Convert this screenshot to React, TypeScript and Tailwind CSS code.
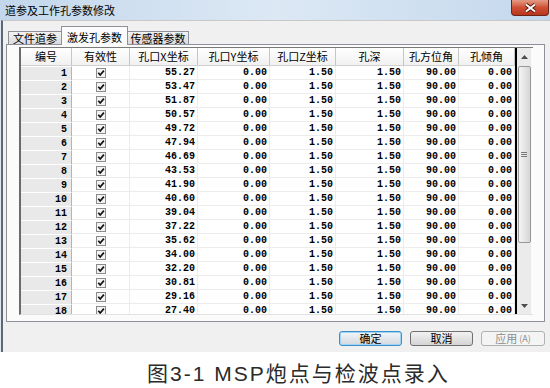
import React from "react";

const xs = [
  "55.27", "53.47", "51.87", "50.57", "49.72", "47.94", "46.69", "43.53", "41.90",
  "40.60", "39.04", "37.22", "35.62", "34.00", "32.20", "30.81", "29.16", "27.40",
];

const cols = [
  { title: "编号", w: "w-[51px]" },
  { title: "有效性", w: "w-[58px]" },
  { title: "孔口X坐标", w: "w-[68px]" },
  { title: "孔口Y坐标", w: "w-[72px]" },
  { title: "孔口Z坐标", w: "w-[66px]" },
  { title: "孔深", w: "w-[68px]" },
  { title: "孔方位角", w: "w-[55px]" },
  { title: "孔倾角", w: "w-[56px]" },
];

const cjk = { fontFamily: '"Noto Sans CJK SC", "Noto Sans", sans-serif' };
const mono = { fontFamily: '"Liberation Mono", "DejaVu Sans Mono", monospace' };

function Check() {
  return (
    <svg width="10" height="10" viewBox="0 0 10 10">
      <rect x="0.5" y="0.5" width="9" height="9" fill="#f3f3f3" stroke="#8a8a8a" />
      <path d="M2.3 4.8 L4.2 7 L7.9 2.6" fill="none" stroke="#111" strokeWidth="1.7" />
    </svg>
  );
}

function Row({ n, x }: { n: number; x: string }) {
  const cell = "h-[14px] flex items-center justify-end pr-[2px] border-r border-b border-[#ececec]";
  return (
    <div className="flex text-[10px] font-bold text-black" style={mono}>
      <div className="w-[51px] h-[14px] flex items-center justify-end pr-[4px] bg-[#e9e9e9] border-t border-white border-r border-r-[#b4b4b4]">
        {n}
      </div>
      <div className="w-[58px] h-[14px] flex items-center justify-center border-r border-b border-[#ececec]">
        <Check />
      </div>
      <div className={`w-[68px] ${cell}`}>{x}</div>
      <div className={`w-[72px] ${cell}`}>0.00</div>
      <div className={`w-[66px] ${cell}`}>1.50</div>
      <div className={`w-[68px] ${cell}`}>1.50</div>
      <div className={`w-[55px] ${cell}`}>90.00</div>
      <div className={`w-[56px] ${cell}`}>0.00</div>
    </div>
  );
}

function ScrollBar() {
  return (
    <div className="w-[15px] bg-[#ebebeb] flex flex-col items-center border-r border-[#f7f7f7]">
      <div className="h-[18px] w-full flex items-center justify-center">
        <svg width="7" height="4" viewBox="0 0 7 4">
          <path d="M0 4 L3.5 0 L7 4 Z" fill="#4d4d4d" />
        </svg>
      </div>
      <div className="w-[13px] h-[177px] rounded-[2px] border border-[#979797] bg-gradient-to-r from-[#f5f5f5] to-[#d6d6d6] flex flex-col items-center justify-center gap-[1px]">
        <div className="w-[6px] h-px bg-[#7a7a7a]" />
        <div className="w-[6px] h-px bg-[#7a7a7a]" />
        <div className="w-[6px] h-px bg-[#7a7a7a]" />
      </div>
      <div className="flex-1" />
      <div className="h-[14px] w-full flex items-start justify-center pt-[4px]">
        <svg width="7" height="4" viewBox="0 0 7 4">
          <path d="M0 0 L3.5 4 L7 0 Z" fill="#4d4d4d" />
        </svg>
      </div>
    </div>
  );
}

export default function App() {
  return (
    <div className="w-[550px] h-[388px] bg-white overflow-hidden" style={cjk}>
      {/* title bar */}
      <div className="h-[20px] flex items-start bg-gradient-to-r from-[#c3d7ec] via-[#dce8f4] to-[#c4d8ed]">
        <span className="ml-[5px] mt-[3px] text-[11px] leading-[14px] text-black">道参及工作孔参数修改</span>
        <div className="ml-auto mr-[1px] w-[38px] h-[16px] rounded-b-[4px] border border-t-0 border-[#6e2417] bg-gradient-to-b from-[#e39a86] via-[#cf4f34] to-[#b8361c] flex items-center justify-center">
          <svg width="13" height="10" viewBox="0 0 13 10">
            <path d="M2 1.5 L11 8.5 M11 1.5 L2 8.5" stroke="#4b140b" strokeWidth="3.6" />
            <path d="M2 1.5 L11 8.5 M11 1.5 L2 8.5" stroke="#ffffff" strokeWidth="2" />
          </svg>
        </div>
      </div>

      {/* window body */}
      <div className="flex h-[332px]">
        <div className="w-px bg-[#dfe8f2]" />
        <div className="flex-1 flex flex-col bg-[#f0f0f0] border-l-2 border-[#5f6770] border-t border-t-[#c9c9c9] pt-[5px]">
          {/* tabs */}
          <div className="relative z-10 -mb-px ml-[5px] h-[19px] flex items-end text-[11px] text-black">
            <div className="w-[53px] h-[14px] flex items-center justify-center border border-[#8e9197] border-r-0 bg-gradient-to-b from-[#f2f2f2] to-[#dbdbdb]">
              文件道参
            </div>
            <div className="w-[67px] h-[19px] flex items-start justify-center pt-[2px] border border-b-0 border-[#8e9197] bg-[#fbfbfb]">
              激发孔参数
            </div>
            <div className="w-[61px] h-[14px] flex items-center justify-center border border-[#8e9197] border-l-0 bg-gradient-to-b from-[#f2f2f2] to-[#dbdbdb]">
              传感器参数
            </div>
          </div>

          {/* tab panel */}
          <div className="ml-[3px] w-[539px] h-[278px] border border-[#8e9197] bg-[#fbfbfb] pl-[12px] pt-[2px]">
            <div className="w-[514px] h-[268px] flex bg-white border-t border-l-2 border-[#6b6b6b] border-t-[#7a7a7a] border-b border-b-[#e2e2e2]">
              <div className="w-[494px] overflow-hidden flex flex-col">
                <div className="h-[18px] shrink-0 flex bg-gradient-to-b from-white to-[#f1f1f1] border-b border-[#d0d0d0] text-[11px] text-black">
                  {cols.map((c) => (
                    <div key={c.title} className={`${c.w} flex items-center justify-center border-r border-[#c6c6c6]`}>
                      {c.title}
                    </div>
                  ))}
                </div>
                {xs.map((x, i) => (
                  <Row key={i} n={i + 1} x={x} />
                ))}
              </div>
              <div className="w-[2px] bg-black" />
              <ScrollBar />
            </div>
          </div>

          {/* buttons */}
          <div className="mt-[9px] flex justify-end gap-[8px] pr-[5px] text-[11px]">
            <button className="w-[63px] h-[15px] rounded-[3px] border border-[#3d8fc9] bg-gradient-to-b from-[#f3f6f9] to-[#d3d9df] shadow-[inset_0_0_0_1px_#9fd4f5] flex items-center justify-center leading-none text-black">
              确定
            </button>
            <button className="w-[63px] h-[15px] rounded-[3px] border border-[#707070] bg-gradient-to-b from-[#f2f2f2] to-[#d4d4d4] flex items-center justify-center leading-none text-black">
              取消
            </button>
            <button className="w-[64px] h-[15px] rounded-[3px] border border-[#adb2b5] bg-[#f4f4f4] flex items-center justify-center leading-none text-[#8d8d8d]">
              应用<span className="text-[9px] ml-[2px]">(A)</span>
            </button>
          </div>
        </div>
      </div>

      {/* caption */}
      <div
        className="h-[36px] pt-[8px] pl-[147px] flex items-center text-[21px] tracking-[2px] text-[#2b2b2b]"
        style={{ fontFamily: '"Liberation Sans", "Noto Sans CJK SC", sans-serif' }}
      >
        图3-1 MSP炮点与检波点录入
      </div>
    </div>
  );
}
